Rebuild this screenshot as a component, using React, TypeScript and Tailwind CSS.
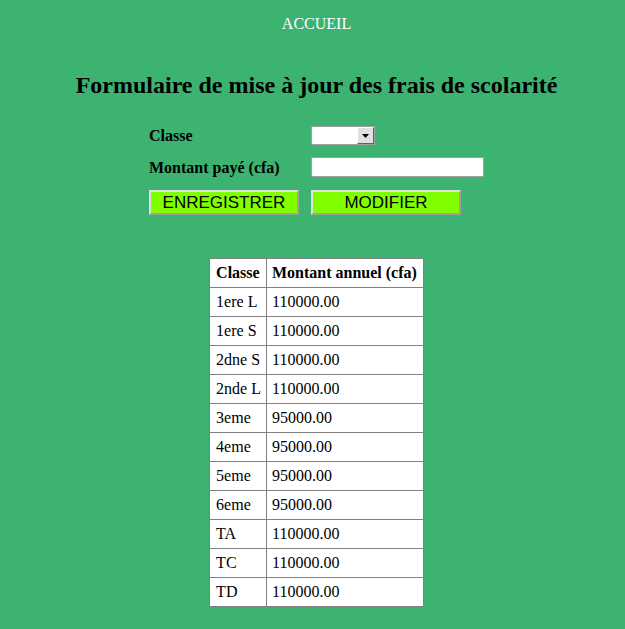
import React from "react";

const rows: [string, string][] = [
  ["1ere L", "110000.00"],
  ["1ere S", "110000.00"],
  ["2dne S", "110000.00"],
  ["2nde L", "110000.00"],
  ["3eme", "95000.00"],
  ["4eme", "95000.00"],
  ["5eme", "95000.00"],
  ["6eme", "95000.00"],
  ["TA", "110000.00"],
  ["TC", "110000.00"],
  ["TD", "110000.00"],
];

export default function App() {
  return (
    <div className="w-[625px] h-[629px] bg-[#3cb371] text-black font-['Liberation_Serif',serif] flex flex-col items-center pl-[8px]">
      <div className="mt-[15px] h-[18px] text-[16px] leading-[18px] text-white">ACCUEIL</div>
      <h1 className="mt-[38px] h-[28px] text-[24px] leading-[28px] font-bold">
        Formulaire de mise à jour des frais de scolarité
      </h1>
      <div className="mt-[27px] w-full pl-[141px] flex flex-col">
        <div className="flex items-center h-[19px]">
          <div className="w-[162px] text-[16px] font-bold leading-[19px]">Classe</div>
          <div className="w-[64px] h-[19px] bg-white border border-[#a0a0a0] flex justify-end">
            <div className="w-[17px] h-[17px] bg-[#e0e0e0] border border-t-white border-l-white border-b-[#606060] border-r-[#606060] flex items-center justify-center">
              <svg width="7" height="4" viewBox="0 0 7 4"><path d="M0 0h7L3.5 4z" fill="#000" /></svg>
            </div>
          </div>
        </div>
        <div className="flex items-center h-[20px] mt-[12px]">
          <div className="w-[162px] text-[16px] font-bold leading-[19px]">Montant payé (cfa)</div>
          <div className="w-[173px] h-[20px] bg-white border border-[#a0a0a0]" />
        </div>
        <div className="flex mt-[13px] gap-[12px]">
          <button className="w-[150px] h-[25px] bg-[#80ff00] border-2 border-t-[#e0e0e0] border-l-[#e0e0e0] border-b-[#a0a0a0] border-r-[#a0a0a0] font-['Liberation_Sans',sans-serif] text-[17px] leading-[19px] text-black flex items-center justify-center">
            ENREGISTRER
          </button>
          <button className="w-[150px] h-[25px] bg-[#80ff00] border-2 border-t-[#e0e0e0] border-l-[#e0e0e0] border-b-[#a0a0a0] border-r-[#a0a0a0] font-['Liberation_Sans',sans-serif] text-[17px] leading-[19px] text-black flex items-center justify-center">
            MODIFIER
          </button>
        </div>
      </div>
      <table className="mt-[43px] bg-white border border-[#333] border-collapse text-[16px] leading-[18px] whitespace-nowrap">
        <thead>
          <tr>
            <th className="border border-[#808080] h-[29px] pl-[6px] pr-[5px] text-left font-bold">Classe</th>
            <th className="border border-[#808080] h-[29px] pl-[5px] pr-[6px] text-left font-bold">Montant annuel (cfa)</th>
          </tr>
        </thead>
        <tbody>
          {rows.map(([c, m]) => (
            <tr key={c}>
              <td className="border border-[#808080] h-[29px] pl-[6px] pr-[5px]">{c}</td>
              <td className="border border-[#808080] h-[29px] pl-[5px] pr-[6px]">{m}</td>
            </tr>
          ))}
        </tbody>
      </table>
    </div>
  );
}
